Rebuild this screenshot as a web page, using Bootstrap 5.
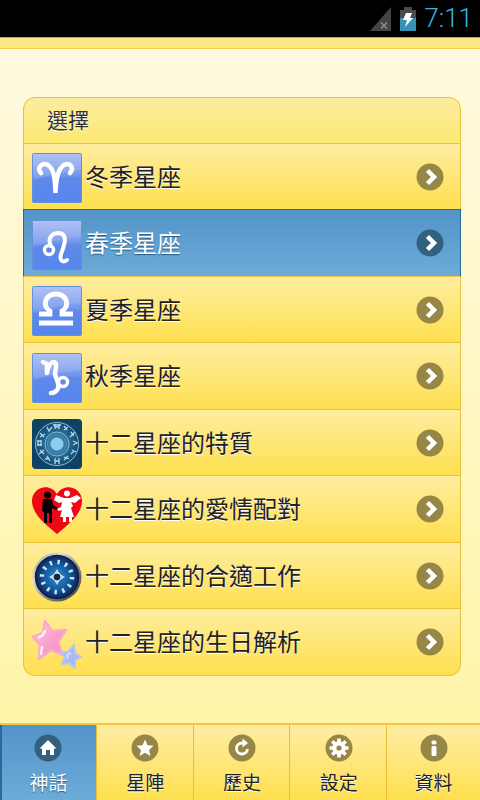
<!DOCTYPE html>
<html lang="zh-Hant">
<head>
<meta charset="utf-8">
<meta name="viewport" content="width=device-width, initial-scale=1">
<title>星座神話</title>
<link href="https://cdn.jsdelivr.net/npm/bootstrap@5.3.0/dist/css/bootstrap.min.css" rel="stylesheet">
<style>
body{font-family:"Noto Sans","Noto Sans CJK TC",sans-serif;color:#222;background:#000}
.status-bar{height:37px;padding-right:7px;background:#000;color:#33b5e5;font:300 26px/37px Roboto,sans-serif}
.title-strip{height:12px;background:linear-gradient(#f8e888,#fce976);border-top:1px solid #b5a55c;border-bottom:1px solid #f5cb4c}
.page-area{background:linear-gradient(#fffae0,#fff4a8);padding:48px 19px 40px 23px}
.menu-list{--bs-list-group-bg:transparent;--bs-list-group-border-color:#e9bf3d;--bs-list-group-border-radius:12px;border-radius:12px;overflow:hidden;background:#fee463}
.menu-list .menu-head{height:47px;padding:0 23px;font-size:21px;line-height:44px;color:#333;background:linear-gradient(#fceda0,#fde872);text-shadow:0 1px 0 #fff}
.menu-list .menu-row{min-height:66px;padding:0 16px 0 8px;font-size:24px;line-height:36px;color:#222;background:linear-gradient(#feeda0,#fee04f);text-shadow:0 1px 0 #fff}
.menu-list .menu-row:nth-child(odd){min-height:67px}
.menu-list .menu-row.active{color:#fff;background:linear-gradient(#5393c8,#6dabd8);border-color:#236c9d;border-bottom-color:#f2c841;margin-top:-1px;border-top-width:1px;min-height:68px;text-shadow:0 1px 1px #245b85}
.menu-row .pic{width:50px;height:50px;margin-right:3px;margin-top:3px}
.dot{width:28px;height:28px;color:#968746}
.active .dot{color:#32617f}
.tab-bar{height:77px;border-top:2px solid #f5c83b}
.tab-bar .nav-link{flex:1 1 0;padding:9px 1px 0 2px;border-right:1px solid #edbc32;color:#222;font-size:19px;line-height:28px;background:linear-gradient(#feeda5,#fee04f);text-shadow:0 1px 0 #fff;border-radius:0}
.tab-bar .nav-link:last-child{border-right:0;padding-right:0;padding-left:0}
.tab-bar .nav-link.active{color:#fff;background:linear-gradient(#5393c8,#6dabd8);text-shadow:0 1px 1px #245b85;box-shadow:inset 2px 0 #236c9d}
.tab-bar .tab-text{margin-top:7px}
</style>
<script src="https://cdn.jsdelivr.net/npm/bootstrap@5.3.0/dist/js/bootstrap.bundle.min.js"></script>
</head>
<body>
<svg width="0" height="0" class="position-absolute" aria-hidden="true">
<defs>
<linearGradient id="tile" x2="0" y2="1"><stop stop-color="#a5b9f3"/><stop offset=".45" stop-color="#7196ec"/><stop offset=".5" stop-color="#6089e8"/><stop offset="1" stop-color="#5686ee"/></linearGradient>
<radialGradient id="sky"><stop stop-color="#4da0d0"/><stop offset=".5" stop-color="#246c98"/><stop offset="1" stop-color="#0d4264"/></radialGradient>
<linearGradient id="rim" x2="1" y2="1"><stop stop-color="#999"/><stop offset=".3" stop-color="#ddd"/><stop offset=".6" stop-color="#888"/><stop offset="1" stop-color="#333"/></linearGradient>
<radialGradient id="dial"><stop stop-color="#2f8bc8"/><stop offset=".55" stop-color="#1460a4"/><stop offset="1" stop-color="#0c2657"/></radialGradient>
<linearGradient id="rose" x2="1" y2="1"><stop stop-color="#ffd4e4"/><stop offset=".5" stop-color="#fb9fce"/><stop offset="1" stop-color="#f48cb8"/></linearGradient>
<symbol id="base" viewBox="0 0 50 50"><rect x=".5" y=".5" width="49" height="49" rx="1" fill="url(#tile)" stroke="#6392dc"/><path d="M1 1H49V17Q27 19 1 27Z" fill="#fff" opacity=".13"/></symbol>
<symbol id="next" viewBox="0 0 28 28"><circle cx="14" cy="14" r="13.5" fill="currentColor"/><path d="M11.500 7.500L18 14L11.500 20.500" fill="none" stroke="#fff" stroke-width="4.500"/></symbol>
</defs>
</svg>
<div class="d-flex flex-column min-vh-100">
<div class="status-bar d-flex justify-content-end align-items-center">
<svg width="22" height="24" viewBox="0 0 22 24" aria-hidden="true"><path d="M0 24L21 0V24Z" fill="#444"/><path d="M11 15.500L17 21.500M17 15.500L11 21.500" stroke="#8a8a8a" stroke-width="1.600"/></svg>
<svg class="ms-2" width="16" height="24" viewBox="0 0 16 24" aria-hidden="true"><path d="M4 0H12V3H16V24H0V3H4Z" fill="#4b4b4b"/><path d="M0 11H16V24H0Z" fill="#3792b5"/><path d="M6 6H12L10 11H13L5 20L7 13H3Z" fill="#fff"/></svg>
<span class="ps-2">7:11</span>
</div>
<header class="title-strip"></header>
<main class="page-area flex-grow-1">
<div class="list-group menu-list">
<div class="list-group-item menu-head">選擇</div>
<a href="#winter" class="list-group-item menu-row d-flex align-items-center"><svg class="pic" viewBox="0 0 50 50" aria-hidden="true"><use href="#base"/><path d="M9 20C4 14 11 9 16 12C22 16 23 25 23.500 40C24 25 26 16 32 12C37 9 43 14 38 20" fill="none" stroke="#fff" stroke-width="4.500" stroke-linecap="round"/></svg><span class="flex-grow-1">冬季星座</span><svg class="dot" aria-hidden="true"><use href="#next"/></svg></a>
<a href="#spring" class="list-group-item menu-row active d-flex align-items-center" aria-current="true"><svg class="pic" viewBox="0 0 50 50" aria-hidden="true"><use href="#base"/><circle cx="17" cy="30" r="4.500" fill="none" stroke="#fff" stroke-width="3.500"/><path d="M19 26C15 18 20 13 27 13C36 14 33 24 29 34C27 41 31 43 35 40" fill="none" stroke="#fff" stroke-width="4" stroke-linecap="round"/></svg><span class="flex-grow-1">春季星座</span><svg class="dot" aria-hidden="true"><use href="#next"/></svg></a>
<a href="#summer" class="list-group-item menu-row d-flex align-items-center"><svg class="pic" viewBox="0 0 50 50" aria-hidden="true"><use href="#base"/><path d="M7 28H18V25C9 19 14 8 24 8C34 8 39 19 30 25V28H41M7 37H41" fill="none" stroke="#fff" stroke-width="4.800"/></svg><span class="flex-grow-1">夏季星座</span><svg class="dot" aria-hidden="true"><use href="#next"/></svg></a>
<a href="#autumn" class="list-group-item menu-row d-flex align-items-center"><svg class="pic" viewBox="0 0 50 50" aria-hidden="true"><use href="#base"/><path d="M11 9L15 11V20C16 14 18 9 22 9C26 10 23 17 23 21C24 26 29 33 25 37C23 40 21 40 19 40" fill="none" stroke="#fff" stroke-width="4.500" stroke-linecap="round" stroke-linejoin="round"/><circle cx="31" cy="29" r="4.500" fill="none" stroke="#fff" stroke-width="3.500"/></svg><span class="flex-grow-1">秋季星座</span><svg class="dot" aria-hidden="true"><use href="#next"/></svg></a>
<a href="#traits" class="list-group-item menu-row d-flex align-items-center"><svg class="pic" viewBox="0 0 50 50" aria-hidden="true"><rect width="50" height="50" rx="4" fill="#0d4264"/><rect x="1" y="1" width="48" height="48" rx="4" fill="url(#sky)"/><g fill="none" stroke="#8fbad0"><circle cx="25" cy="25" r="21.500"/><circle cx="25" cy="25" r="12"/><circle cx="25" cy="25" r="9.500" opacity=".4"/></g><g fill="none" stroke="#b9d6e4" stroke-width="1.300"><path d="M23 5V10M27 5V10M23 8H27M21 6H29M32 7L35 11M36 8L32 11M39 13L42 17M43 13L38 18M41 22L45 24L41 26M40 31L44 33M39 35L42 32M32 38L37 40M32 41L36 37M23 39V45M27 39V45M23 42H27M15 37L18 42M13 40L17 39M8 31L12 35M7 35L12 31M5 22H10M5 26H10M6 22V27M9 22V27M8 14L12 18M8 18L13 15M15 8L17 12L20 8"/></g><circle cx="25" cy="25" r="6.500" fill="#8ccdf0"/></svg><span class="flex-grow-1">十二星座的特質</span><svg class="dot" aria-hidden="true"><use href="#next"/></svg></a>
<a href="#love" class="list-group-item menu-row d-flex align-items-center"><svg class="pic" viewBox="0 0 50 50" aria-hidden="true"><path d="M25 48C16 40 0 29 0 15C0 1 18-4 25 8C32-4 50 1 50 15C50 29 34 40 25 48Z" fill="#ed0814"/><circle cx="15.500" cy="9" r="3.500"/><path d="M11 13H20L21 19L26 22L24 24L20 22V37H17V27H15V37H12V26L10 25Z"/><circle cx="35" cy="7.500" r="3" fill="#fff"/><path d="M32 12L24 9L22 14L27 17L30 16L29 21L25 23L27 25L30 24L28 31H31V36H34V31H37V36H40V31H42L39 22L41 20L39 16L43 17L49 12L45 9L38 12Z" fill="#fff"/></svg><span class="flex-grow-1">十二星座的愛情配對</span><svg class="dot" aria-hidden="true"><use href="#next"/></svg></a>
<a href="#work" class="list-group-item menu-row d-flex align-items-center"><svg class="pic" viewBox="0 0 50 50" aria-hidden="true"><circle cx="25" cy="25" r="24.500" fill="url(#rim)"/><circle cx="25" cy="25" r="21.500" fill="url(#dial)" stroke="#101f43" stroke-width="1.500"/><circle cx="25" cy="25" r="15" fill="none" stroke="#cfe4f4" stroke-width="4.500" stroke-dasharray="2.400 5.450"/><path d="M25 17L28 22L33 25L28 28L25 33L22 28L17 25L22 22Z" fill="#b5def0"/><circle cx="25" cy="25" r="4" fill="#10294c" stroke="#d6eef7"/></svg><span class="flex-grow-1">十二星座的合適工作</span><svg class="dot" aria-hidden="true"><use href="#next"/></svg></a>
<a href="#birthday" class="list-group-item menu-row d-flex align-items-center"><svg class="pic" viewBox="0 0 50 50" aria-hidden="true"><path d="M13 2L20 12L34 11L26 23L31 36L19 31L7 40L8 26L1 18L11 14Z" fill="url(#rose)" stroke="#fba9c8" stroke-width="2.500" stroke-linejoin="round"/><path d="M13 12L10 17L7 18M10 28L9 35" stroke="#fff" stroke-width="2.500" stroke-linecap="round" fill="none" opacity=".8"/><path d="M42 26L43 34L49 38L43 41L43 49L37 44L30 45L33 38L29 33L36 33Z" fill="#a9b9f6" stroke="#b4c3f8" stroke-width="2" stroke-linejoin="round"/><path d="M39 34L35 36L36 40" stroke="#dce4ff" stroke-width="1.500" fill="none"/></svg><span class="flex-grow-1">十二星座的生日解析</span><svg class="dot" aria-hidden="true"><use href="#next"/></svg></a>
</div>
</main>
<nav class="tab-bar d-flex text-center">
<a href="#myth" class="nav-link active" aria-current="page"><svg class="dot d-block mx-auto" viewBox="0 0 28 28" aria-hidden="true"><circle cx="14" cy="14" r="13.500" fill="currentColor"/><path d="M14 6L22.500 14.500H20V21H16V16H12V21H8V14.500H5.500Z" fill="#fff"/></svg><div class="tab-text">神話</div></a>
<a href="#stars" class="nav-link"><svg class="dot d-block mx-auto" viewBox="0 0 28 28" aria-hidden="true"><circle cx="14" cy="14" r="13.500" fill="currentColor"/><path d="M14 5.500L16.500 11.300L22.500 11.800L18 16L19.400 22L14 18.800L8.600 22L10 16L5.500 11.800L11.500 11.300Z" fill="#fff"/></svg><div class="tab-text">星陣</div></a>
<a href="#history" class="nav-link"><svg class="dot d-block mx-auto" viewBox="0 0 28 28" aria-hidden="true"><circle cx="14" cy="14" r="13.500" fill="currentColor"/><path d="M19.500 15A5.500 5.500 0 1 1 14 9H16" fill="none" stroke="#fff" stroke-width="2.800"/><path d="M14.500 4.500L20 9L14.500 13.500Z" fill="#fff"/></svg><div class="tab-text">歷史</div></a>
<a href="#settings" class="nav-link"><svg class="dot d-block mx-auto" viewBox="0 0 28 28" aria-hidden="true"><circle cx="14" cy="14" r="13.500" fill="currentColor"/><path d="M14 4.500V23.500M4.500 14H23.500M7.300 7.300L20.700 20.700M20.700 7.300L7.300 20.700" stroke="#fff" stroke-width="3.600"/><circle cx="14" cy="14" r="6.800" fill="#fff"/><circle cx="14" cy="14" r="2.600" fill="currentColor"/></svg><div class="tab-text">設定</div></a>
<a href="#info" class="nav-link"><svg class="dot d-block mx-auto" viewBox="0 0 28 28" aria-hidden="true"><circle cx="14" cy="14" r="13.500" fill="currentColor"/><rect x="11.500" y="6.500" width="5" height="4" rx="1.500" fill="#fff"/><rect x="11.500" y="12" width="5" height="10" rx="1.500" fill="#fff"/></svg><div class="tab-text">資料</div></a>
</nav>
</div>
</body>
</html>
